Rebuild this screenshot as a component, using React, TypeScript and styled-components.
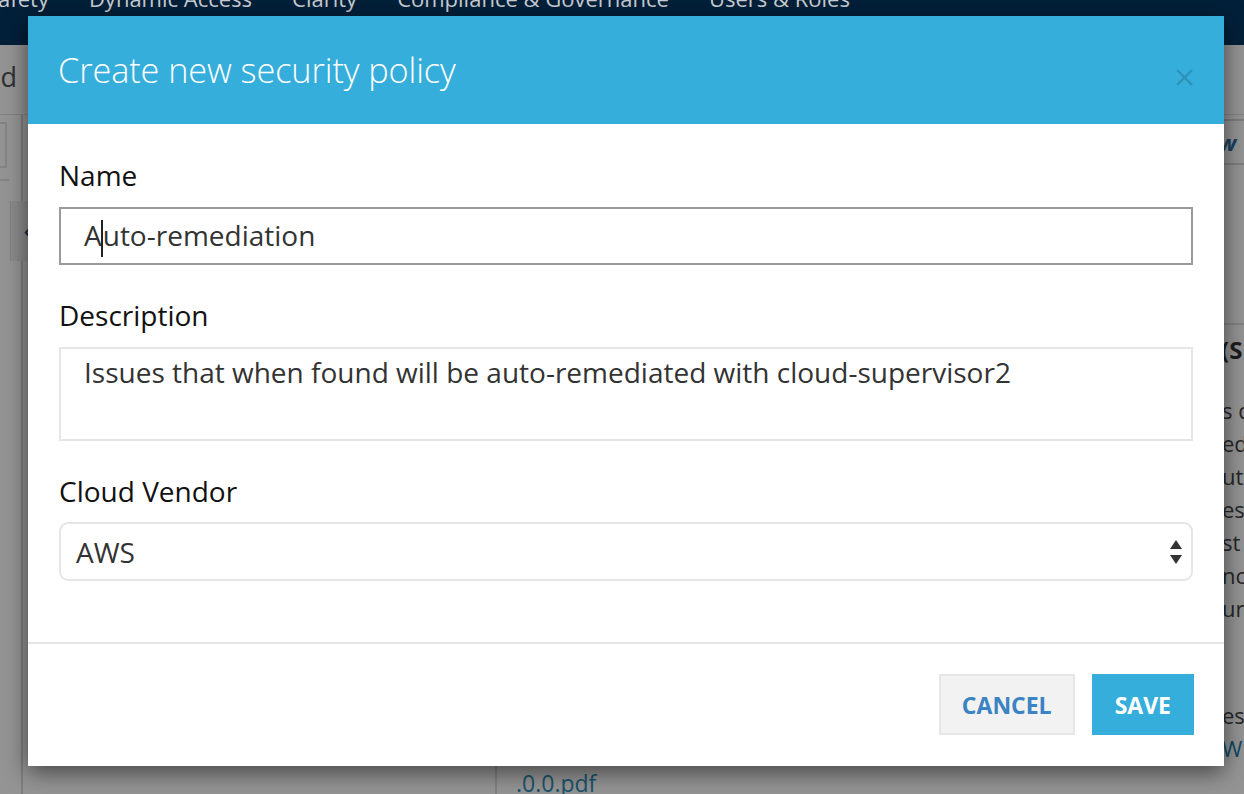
import React from "react";
import styled, { createGlobalStyle } from "styled-components";

const GlobalStyle = createGlobalStyle`
  html, body { margin: 0; padding: 0; }
  body {
    font-family: "Open Sans", "Liberation Sans", sans-serif;
    background: #ffffff;
    overflow: hidden;
  }
  * { box-sizing: border-box; }
`;

/* ---------- background page ---------- */

const Page = styled.div`
  position: relative;
  width: 1244px;
  height: 794px;
  overflow: hidden;
  display: flex;
  flex-direction: column;
  background: #ffffff;
`;

const TopNav = styled.nav`
  position: relative;
  z-index: 2;
  height: 45px;
  flex: none;
  background: #03203a;
  display: flex;
  align-items: flex-start;
  gap: 40px;
`;

const NavItem = styled.span<{ $offset?: number }>`
  margin-top: -15px;
  margin-left: ${(p) => p.$offset ?? 0}px;
  font-size: 22px;
  line-height: 26px;
  color: #c9ced4;
  white-space: nowrap;
`;

const Crumbs = styled.div`
  height: 70px;
  flex: none;
  display: flex;
  align-items: center;
  border-bottom: 1px solid #e2e2e2;
`;

const CrumbText = styled.span`
  margin-left: -33px;
  margin-top: -6px;
  font-size: 27px;
  color: #555;
  white-space: nowrap;
`;

const Workspace = styled.div`
  flex: 1;
  display: flex;
  min-height: 0;
`;

const LeftRail = styled.aside`
  position: relative;
  width: 23px;
  flex: none;
  border-right: 2px solid #dadada;
  padding-top: 7px;
  display: flex;
  flex-direction: column;
`;

const RailSearch = styled.div`
  width: 7px;
  height: 46px;
  border: 2px solid #e4e4e4;
  border-left: none;
`;

const RailRule = styled.div`
  margin-top: 11px;
  width: 9px;
  border-top: 2px solid #e4e4e4;
`;

const RailToggle = styled.div`
  position: absolute;
  top: 86px;
  left: 10px;
  width: 22px;
  height: 60px;
  background: #f0f0f0;
  border-left: 1px solid #e2e2e2;
  display: flex;
  align-items: center;
  justify-content: flex-end;
  padding-right: 2px;
  color: #1b4a78;
  font-size: 16px;
  font-weight: 700;
`;

const CenterPane = styled.section`
  width: 472px;
  flex: none;
`;

const MainPane = styled.section`
  flex: 1;
  border-left: 2px solid #dedede;
  padding-left: 19px;
  display: flex;
  flex-direction: column;
  justify-content: flex-end;
`;

const FileLink = styled.a`
  font-size: 23px;
  color: #2f8fba;
  text-decoration: none;
  margin-bottom: -5px;
`;

const RightPane = styled.section`
  width: 22px;
  flex: none;
  display: flex;
  flex-direction: column;
  overflow: hidden;
  white-space: nowrap;
`;

const RightRow = styled.div<{ $h: number }>`
  height: ${(p) => p.$h}px;
  border-bottom: 2px solid #d9d9d9;
  display: flex;
  align-items: center;
`;

const RightLink = styled.span`
  font-size: 22px;
  font-weight: 700;
  font-style: italic;
  color: #2a6ea6;
  margin-left: -3px;
`;

const RightHeading = styled.div`
  margin-top: 158px;
  padding-top: 8px;
  border-top: 2px solid #e0e0e0;
  font-size: 24px;
  font-weight: 700;
  color: #333;
  margin-left: -1px;
`;

const RightText = styled.div`
  font-size: 22px;
  line-height: 33px;
  color: #444;
`;

const RightBlock = styled.div<{ $top: number }>`
  margin-top: ${(p) => p.$top}px;
`;

const RightAnchor = styled.div`
  font-size: 22px;
  line-height: 33px;
  color: #1d7fb0;
`;

const Backdrop = styled.div`
  position: absolute;
  z-index: 3;
  left: 0;
  right: 0;
  top: 45px;
  bottom: 0;
  background: rgba(0, 0, 0, 0.42);
`;

/* ---------- modal ---------- */

const Modal = styled.div`
  position: absolute;
  z-index: 4;
  left: 28px;
  top: 16px;
  width: 1196px;
  background: #ffffff;
  box-shadow: 0 6px 22px rgba(0, 0, 0, 0.55);
  display: flex;
  flex-direction: column;
`;

const ModalHeader = styled.header`
  height: 108px;
  background: #35aedb;
  display: flex;
  align-items: center;
  justify-content: space-between;
  padding: 0 30px 0 30px;
`;

const ModalTitle = styled.h1`
  margin: 0 0 2px 0;
  font-size: 34.3px;
  font-weight: 300;
  color: #ffffff;
  letter-spacing: -0.1px;
`;

const CloseButton = styled.button`
  border: none;
  background: transparent;
  padding: 0;
  width: 19px;
  height: 19px;
  margin-top: 14px;
  display: flex;
  cursor: pointer;
`;

const ModalBody = styled.div`
  padding: 33px 31px 61px 31px;
  display: flex;
  flex-direction: column;
`;

const Field = styled.div<{ $top?: number }>`
  margin-top: ${(p) => p.$top ?? 0}px;
  display: flex;
  flex-direction: column;
`;

const Label = styled.label<{ $gap: number }>`
  font-size: 28px;
  line-height: 36px;
  color: #111;
  margin-bottom: ${(p) => p.$gap}px;
`;

const TextBox = styled.div`
  height: 58px;
  border: 2px solid #9b9b9b;
  padding-left: 23px;
  display: flex;
  align-items: center;
  font-size: 28px;
  color: #333;
`;

const Caret = styled.span`
  display: inline-block;
  width: 2px;
  height: 37px;
  margin: 0 0 0 -1px;
  background: #222;
  vertical-align: middle;
`;

const TextArea = styled.div`
  height: 94px;
  border: 2px solid #e6e6e6;
  padding: 5px 23px;
  font-size: 28px;
  line-height: 36px;
  color: #333;
`;

const SelectBox = styled.div`
  height: 59px;
  border: 2px solid #e6e6e6;
  border-radius: 9px;
  padding: 0 8px 0 15px;
  display: flex;
  align-items: center;
  justify-content: space-between;
  font-size: 28px;
  color: #333;
`;

const ModalFooter = styled.footer`
  border-top: 2px solid #e6e6e6;
  padding: 30px 30px 31px;
  display: flex;
  justify-content: flex-end;
  gap: 17px;
`;

const Button = styled.button<{ $primary?: boolean }>`
  height: 61px;
  padding: 0 21px;
  font-family: "Open Sans", "Liberation Sans", sans-serif;
  font-size: 23px;
  font-weight: 700;
  text-transform: uppercase;
  border: 2px solid ${(p) => (p.$primary ? "#35aedb" : "#e6e6e6")};
  background: ${(p) => (p.$primary ? "#35aedb" : "#f2f2f2")};
  color: ${(p) => (p.$primary ? "#ffffff" : "#3b83c2")};
  cursor: pointer;
`;

export default function App() {
  return (
    <>
      <GlobalStyle />
      <Page>
        <TopNav>
          <NavItem $offset={-14}>Safety</NavItem>
          <NavItem>Dynamic Access</NavItem>
          <NavItem>Clarity</NavItem>
          <NavItem>Compliance &amp; Governance</NavItem>
          <NavItem>Users &amp; Roles</NavItem>
        </TopNav>
        <Crumbs>
          <CrumbText>Add</CrumbText>
        </Crumbs>
        <Workspace>
          <LeftRail>
            <RailSearch />
            <RailRule />
            <RailToggle>‹</RailToggle>
          </LeftRail>
          <CenterPane />
          <MainPane>
            <FileLink>.0.0.pdf</FileLink>
          </MainPane>
          <RightPane>
            <RightRow $h={6} />
            <RightRow $h={44}>
              <RightLink>w</RightLink>
            </RightRow>
            <RightHeading>(S</RightHeading>
            <RightBlock $top={28}>
              <RightText>s d</RightText>
              <RightText>ed</RightText>
              <RightText>ut</RightText>
              <RightText>ess</RightText>
              <RightText>st</RightText>
              <RightText>nc</RightText>
              <RightText>uri</RightText>
            </RightBlock>
            <RightBlock $top={74}>
              <RightText>es</RightText>
              <RightAnchor>W</RightAnchor>
            </RightBlock>
          </RightPane>
        </Workspace>
        <Backdrop />
        <Modal role="dialog" aria-label="Create new security policy">
          <ModalHeader>
            <ModalTitle>Create new security policy</ModalTitle>
            <CloseButton aria-label="Close">
              <svg width="19" height="19" viewBox="0 0 19 19">
                <path
                  d="M2 2 L17 17 M17 2 L2 17"
                  stroke="rgba(0,0,0,0.17)"
                  strokeWidth="2.2"
                  fill="none"
                />
              </svg>
            </CloseButton>
          </ModalHeader>
          <ModalBody>
            <Field>
              <Label $gap={14}>Name</Label>
              <TextBox>
                <span>
                  A<Caret />
                  uto-remediation
                </span>
              </TextBox>
            </Field>
            <Field $top={32}>
              <Label $gap={14}>Description</Label>
              <TextArea>
                Issues that when found will be auto-remediated with cloud-supervisor2
              </TextArea>
            </Field>
            <Field $top={32}>
              <Label $gap={13}>Cloud Vendor</Label>
              <SelectBox>
                <span>AWS</span>
                <svg width="14" height="26" viewBox="0 0 14 26">
                  <path d="M7 1 L13 10 L1 10 Z" fill="#333" />
                  <path d="M1 16 L13 16 L7 25 Z" fill="#333" />
                </svg>
              </SelectBox>
            </Field>
          </ModalBody>
          <ModalFooter>
            <Button>Cancel</Button>
            <Button $primary>Save</Button>
          </ModalFooter>
        </Modal>
      </Page>
    </>
  );
}
